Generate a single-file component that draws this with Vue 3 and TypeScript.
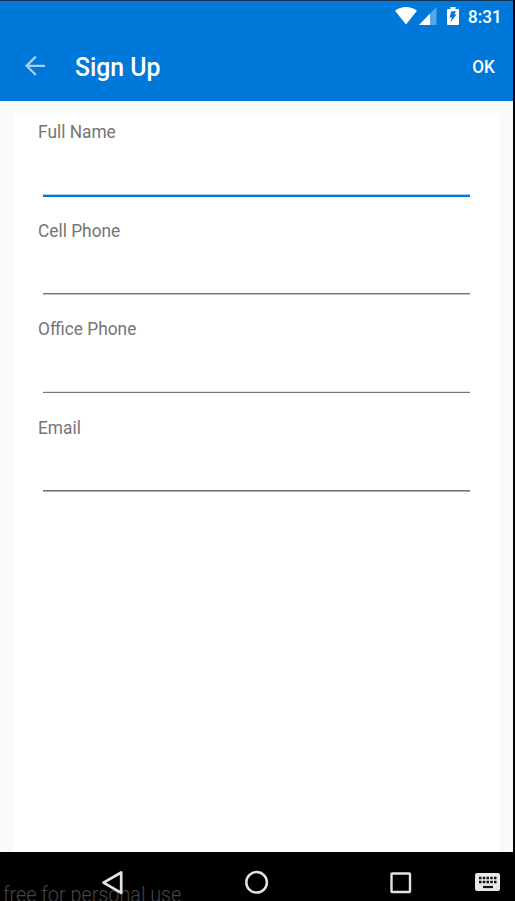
<script setup lang="ts">
import { reactive } from 'vue'

interface Field {
  id: string
  label: string
  kind: string
}

const fields: Field[] = [
  { id: 'name', label: 'Full Name', kind: 'active' },
  { id: 'cell', label: 'Cell Phone', kind: 'second' },
  { id: 'office', label: 'Office Phone', kind: 'third' },
  { id: 'email', label: 'Email', kind: 'fourth' },
]

const values = reactive<Record<string, string>>({ name: '', cell: '', office: '', email: '' })
</script>

<template>
  <div class="device">
    <div class="screen">
      <header class="top">
        <div class="status">
          <svg class="wifi" width="22" height="18" viewBox="0 0 22 18">
            <path d="M0 3.7C6.3-1.2 15.7-1.2 22 3.7L11 17.5Z" fill="#fff" />
          </svg>
          <svg class="signal" width="18" height="18" viewBox="0 0 18 18">
            <path d="M0 18L17.5 0V18Z" fill="#58a6e8" />
            <path d="M0 18L11 6.7V18Z" fill="#fff" />
          </svg>
          <svg class="battery" width="12" height="18" viewBox="0 0 12 18">
            <path fill-rule="evenodd" fill="#fff" d="M3.5 0h5v2H11q1 0 1 1v14q0 1-1 1H1q-1 0-1-1V3q0-1 1-1h2.500ZM4.200 4.200H9L7.400 7.500H9.600L3.300 15.500L4.900 10.500H2.600Z" />
          </svg>
          <span class="clock">8:31</span>
        </div>
        <div class="toolbar">
          <svg class="back" width="22" height="22" viewBox="0 0 22 22">
            <path d="M11.800 1.600L2.600 10.800L11.800 20M2.600 10.800H21" fill="none" stroke="#a5d0f5" stroke-width="2.300" />
          </svg>
          <h1>Sign Up</h1>
          <button type="button">OK</button>
        </div>
      </header>
      <main class="content">
        <form class="card" @submit.prevent>
          <div v-for="f in fields" :key="f.id" class="field" :class="f.kind">
            <label :for="f.id">{{ f.label }}</label>
            <input :id="f.id" v-model="values[f.id]" type="text" autocomplete="off" />
            <div class="line"></div>
          </div>
        </form>
      </main>
    </div>
    <nav class="nav">
      <span class="watermark">free for personal use</span>
      <svg class="nav-back" width="24" height="26" viewBox="0 0 24 26">
        <path d="M20.200 2.500V22.900L2.500 12.700Z" fill="none" stroke="#e3e3e3" stroke-width="2.700" stroke-linejoin="round" />
      </svg>
      <svg class="nav-home" width="24" height="24" viewBox="0 0 24 24">
        <circle cx="11.600" cy="12.300" r="10.300" fill="none" stroke="#e3e3e3" stroke-width="2.500" />
      </svg>
      <svg class="nav-recent" width="22" height="22" viewBox="0 0 22 22">
        <rect x="1.500" y="1.500" width="18.500" height="18.500" rx=".7" fill="none" stroke="#e3e3e3" stroke-width="2.400" />
      </svg>
      <svg class="nav-keys" width="25" height="18" viewBox="0 0 25 18">
        <rect width="25" height="18" rx="2.200" fill="#e8e8e8" />
        <path d="M4 5h17.500M4 9h17.500" stroke="#111" stroke-width="2.500" stroke-dasharray="2.500 1.250" />
        <path d="M8 14h10" stroke="#111" stroke-width="2.200" />
      </svg>
    </nav>
  </div>
</template>

<style>
body {
  margin: 0;
  overflow: hidden;
}
</style>

<style scoped>
.device {
  width: 515px;
  height: 901px;
  display: flex;
  flex-direction: column;
  background: #000;
  font-family: Roboto, sans-serif;
  overflow: hidden;
}
.screen {
  width: 513px;
  height: 852px;
  display: flex;
  flex-direction: column;
  background: #fafafa;
}
.top {
  box-sizing: border-box;
  height: 101px;
  flex: none;
  background: #0078d9;
  border-top: 1px solid #17324f;
}
.status {
  box-sizing: border-box;
  height: 30px;
  display: flex;
  align-items: center;
  padding-left: 395px;
}
.wifi {
  margin-right: 2px;
}
.signal {
  margin-right: 10px;
}
.battery {
  margin-right: 9px;
}
.clock {
  font-size: 17.800px;
  transform: translateY(0.600px) scaleX(0.960);
  transform-origin: left;
  font-weight: 500;
  line-height: 20px;
  color: #fff;
}
.toolbar {
  height: 69px;
  display: flex;
  align-items: center;
  padding: 0 18px 0 24px;
}
h1 {
  margin: 0 0 0 29px;
  flex: 1;
  font-size: 25.400px;
  transform: translateY(0.600px) scaleX(0.976);
  transform-origin: left;
  font-weight: 500;
  line-height: 30px;
  color: #fff;
}
button {
  border: 0;
  padding: 0;
  background: none;
  color: #fff;
  font: 500 17.600px/20px Roboto, sans-serif;
  transform: translate(-0.500px, 0.600px) scaleX(0.970);
  transform-origin: right;
}
.content {
  flex: 1;
  padding: 12px 13px 0;
  display: flex;
}
.card {
  flex: 1;
  background: #fff;
  padding: 9px 30px 0 25px;
}
.field {
  height: 98.500px;
  display: flex;
  flex-direction: column;
}
label {
  align-self: flex-start;
  font-size: 18px;
  transform: translateY(0.300px) scaleX(0.962);
  transform-origin: left;
  line-height: 20px;
  color: #757575;
}
input {
  height: 52px;
  margin: 0 0 0 5px;
  padding: 0;
  border: 0;
  outline: 0;
  background: transparent;
  font: 18px Roboto, sans-serif;
}
.line {
  margin-left: 5px;
  height: 1px;
  background: #737373;
  border-bottom: 1px solid #c4c4c4;
}
.active .line {
  height: 2px;
  background: #0078d9;
  border-top: 1px solid #a6d0f2;
  border-bottom: 0;
}
.fourth .line {
  border-bottom-color: #aaa;
}
.third .line {
  background: #757575;
  border: 0;
  border-top: 1px solid #e4e4e4;
}
.nav {
  position: relative;
  height: 49px;
  display: flex;
  align-items: flex-start;
  overflow: hidden;
}
.watermark {
  position: absolute;
  left: 3px;
  top: 30px;
  color: #464646;
  font-size: 21.500px;
  transform: scaleX(0.920);
  transform-origin: left;
  font-weight: 300;
  line-height: 26px;
  white-space: nowrap;
}
.nav svg {
  position: relative;
}
.nav-back {
  margin: 18px 0 0 101px;
}
.nav-home {
  margin: 18px 0 0 120px;
}
.nav-recent {
  margin: 20px 0 0 121px;
}
.nav-keys {
  margin: 21px 0 0 63px;
}
</style>
